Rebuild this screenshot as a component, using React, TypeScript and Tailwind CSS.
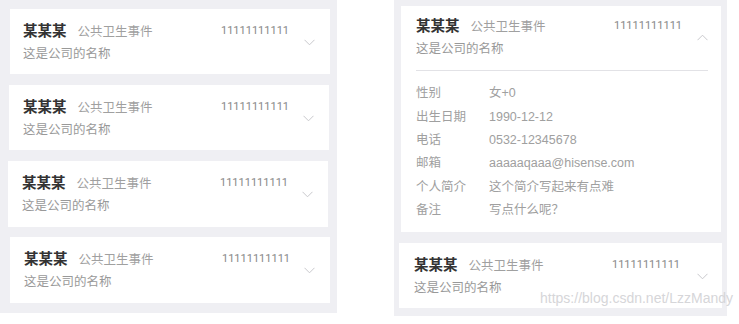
const font = { fontFamily: '"Liberation Sans", "Noto Sans CJK SC", sans-serif' };

const ChevronDown = () => (
  <svg width="11" height="7" viewBox="0 0 11 7" fill="none" stroke="#c8c8cc" strokeWidth="1">
    <path d="M0.5 0.8 L5.5 5.8 L10.5 0.8" />
  </svg>
);

const ChevronUp = () => (
  <svg width="11" height="7" viewBox="0 0 11 7" fill="none" stroke="#c8c8cc" strokeWidth="1">
    <path d="M0.5 6.2 L5.5 1.2 L10.5 6.2" />
  </svg>
);

type HeaderProps = { open?: boolean };

const Header = ({ open }: HeaderProps) => (
  <div className="flex items-center">
    <div className="flex-1">
      <div className="flex items-center h-[21px]">
        <div className="w-[198px] shrink-0 flex items-baseline">
          <span className="text-[14.5px] font-bold text-[#333]">某某某</span>
          <span className="ml-[11px] text-[12.5px] text-[#a0a0a0]">公共卫生事件</span>
        </div>
        <span className="text-[11px] text-[#888] font-[Roboto,sans-serif]">11111111111</span>
      </div>
      <div className="mt-[2px] text-[12.5px] leading-[20px] text-[#999]">这是公司的名称</div>
    </div>
    <div className="w-[11px] mr-[1px] flex items-center">{open ? <ChevronUp /> : <ChevronDown />}</div>
  </div>
);

const details = [
  ["性别", "女+0"],
  ["出生日期", "1990-12-12"],
  ["电话", "0532-12345678"],
  ["邮箱", "aaaaaqaaa@hisense.com"],
  ["个人简介", "这个简介写起来有点难"],
  ["备注", "写点什么呢？"],
];

const App = () => {
  return (
    <div className="relative w-[739px] h-[324px] bg-white flex overflow-hidden" style={font}>
      {/* left list */}
      <div className="w-[337px] h-[313px] bg-[#efeff3] pt-[9px] flex flex-col">
        <div className="ml-[10px] w-[320px] h-[65px] bg-white pl-[13px] pr-[14px] pt-[12px]">
          <Header />
        </div>
        <div className="ml-[9px] mt-[11px] w-[320px] h-[65px] bg-white pl-[14px] pr-[14px] pt-[12px]">
          <Header />
        </div>
        <div className="ml-[8px] mt-[11px] w-[320px] h-[66px] bg-white pl-[14px] pr-[14px] pt-[12px]">
          <Header />
        </div>
        <div className="ml-[10px] mt-[10px] w-[320px] h-[66px] bg-white pl-[14px] pr-[14px] pt-[12px]">
          <Header />
        </div>
      </div>

      {/* right list */}
      <div className="ml-[57px] w-[333px] h-[316px] bg-[#efeff3] pt-[6px] flex flex-col">
        <div className="ml-[7px] w-[320px] h-[226px] bg-white pl-[15px] pr-[12px] pt-[10px]">
          <Header open />
          <div className="mt-[11px] mr-[1px] border-t border-[#e2e2e6]" />
          <div className="mt-[11px]">
            {details.map(([k, v]) => (
              <div key={k} className="flex h-[23.4px] items-center text-[12.5px] text-[#a0a0a0]">
                <span className="w-[73px] shrink-0">{k}</span>
                <span>{v}</span>
              </div>
            ))}
          </div>
        </div>
        <div className="ml-[5px] mt-[11px] w-[323px] h-[65px] bg-white pl-[15px] pr-[13px] pt-[12px]">
          <Header />
        </div>
      </div>

      <div className="absolute left-[540px] top-[288px] text-[14px] text-[#d6d6d9] whitespace-nowrap">
        https://blog.csdn.net/LzzMandy
      </div>
    </div>
  );
};

export default App;
